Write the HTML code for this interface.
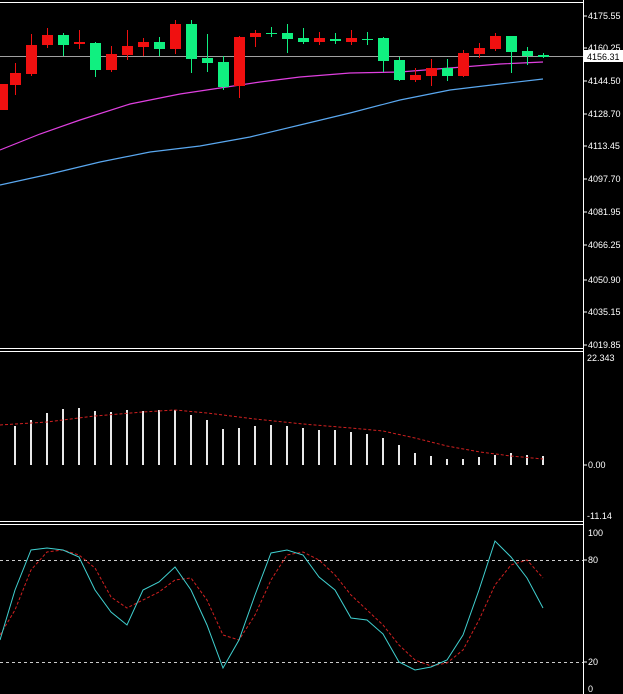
<!DOCTYPE html>
<html><head><meta charset="utf-8"><style>
html,body{margin:0;padding:0;background:#000;width:623px;height:694px;overflow:hidden}
svg{display:block}
text{font-family:"Liberation Sans",sans-serif;font-size:9px;fill:#fff}
</style></head><body>
<svg width="623" height="694" viewBox="0 0 623 694" xmlns="http://www.w3.org/2000/svg">
<rect width="623" height="694" fill="#000"/>
<line x1="0" y1="2.5" x2="583" y2="2.5" stroke="#fff"/>
<line x1="583.5" y1="0" x2="583.5" y2="694" stroke="#fff"/>
<line x1="0" y1="348.5" x2="583" y2="348.5" stroke="#fff"/>
<line x1="0" y1="351.5" x2="583" y2="351.5" stroke="#fff"/>
<line x1="0" y1="521.5" x2="583" y2="521.5" stroke="#fff"/>
<line x1="0" y1="524.5" x2="583" y2="524.5" stroke="#fff"/>
<line x1="0" y1="56.5" x2="583" y2="56.5" stroke="#a0a0a0"/>
<polyline fill="none" stroke="#e040e0" stroke-width="1.2" points="0,150 40,134 80,120 130,104 180,94 220,88 260,82 300,77 350,73 400,72 450,68 500,64 543,62"/>
<polyline fill="none" stroke="#5aa8f0" stroke-width="1.2" points="0,185 50,174 100,162 150,152 200,146 250,137 300,125 350,113 400,100 450,90 500,84 543,79"/>
<g id="c"></g>
<g>
<line x1="583" y1="16" x2="587" y2="16" stroke="#fff"/><text x="588" y="19">4175.55</text>
<line x1="583" y1="48" x2="587" y2="48" stroke="#fff"/><text x="588" y="51">4160.25</text>
<rect x="584" y="50" width="39" height="12" fill="#fff"/><text x="587" y="60" style="fill:#000">4156.31</text>
<line x1="583" y1="81" x2="587" y2="81" stroke="#fff"/><text x="588" y="84">4144.50</text>
<line x1="583" y1="114" x2="587" y2="114" stroke="#fff"/><text x="588" y="117">4128.70</text>
<line x1="583" y1="146" x2="587" y2="146" stroke="#fff"/><text x="588" y="149">4113.45</text>
<line x1="583" y1="179" x2="587" y2="179" stroke="#fff"/><text x="588" y="182">4097.70</text>
<line x1="583" y1="212" x2="587" y2="212" stroke="#fff"/><text x="588" y="215">4081.95</text>
<line x1="583" y1="245" x2="587" y2="245" stroke="#fff"/><text x="588" y="248">4066.25</text>
<line x1="583" y1="280" x2="587" y2="280" stroke="#fff"/><text x="588" y="283">4050.90</text>
<line x1="583" y1="312" x2="587" y2="312" stroke="#fff"/><text x="588" y="315">4035.15</text>
<line x1="583" y1="345" x2="587" y2="345" stroke="#fff"/><text x="588" y="348">4019.85</text>
<text x="587" y="361">22.343</text>
<line x1="583" y1="465" x2="587" y2="465" stroke="#fff"/><text x="588" y="468">0.00</text>
<text x="587" y="519">-11.14</text>
<text x="588" y="536">100</text>
<line x1="583" y1="560" x2="587" y2="560" stroke="#fff"/><text x="588" y="563">80</text>
<line x1="583" y1="662" x2="587" y2="662" stroke="#fff"/><text x="588" y="665">20</text>
<text x="588" y="692">0</text>
</g>
<line x1="0" y1="560.5" x2="583" y2="560.5" stroke="#ccc" stroke-dasharray="3,3"/>
<line x1="0" y1="662.5" x2="583" y2="662.5" stroke="#ccc" stroke-dasharray="3,3"/>
<polyline fill="none" stroke="#d02020" stroke-dasharray="3,2" points="0,635 15,610 31,570 47,552 63,550 79,555 95,568 111,597 127,608 143,600 159,592 175,580 191,578 207,600 223,635 239,640 255,615 271,580 287,555 303,552 319,560 335,575 351,595 367,610 383,625 399,645 415,660 431,666 447,663 463,650 479,620 495,585 511,565 527,560 543,578"/>
<polyline fill="none" stroke="#40d0d0" points="0,640 15,590 31,550 47,548 63,550 79,557 95,590 111,612 127,625 143,590 159,582 175,567 191,590 207,625 223,668 239,640 255,595 271,553 287,550 303,555 319,577 335,590 351,618 367,620 383,634 399,662 415,670 431,667 447,660 463,635 479,590 495,541 511,557 527,578 543,608"/>
<g id="m"></g>
<polyline fill="none" stroke="#d02020" stroke-dasharray="3,2" points="0,425 47,422 95,416 143,412 175,410 207,413 255,419 303,424 351,428 383,431 415,438 447,446 480,452 511,456 543,459"/>
</svg>
<script>
var C=[[2,84,110,84,110,1],[15,73,85,63,95,1],[31,45,74,34,76,1],[47,35,45,28,48,1],[63,35,45,33,56,0],[79,42,44,30,49,1],[95,43,70,42,77,0],[111,54,70,46,72,1],[127,46,55,30,60,1],[143,42,47,38,56,1],[159,42,49,37,56,0],[175,24,49,20,54,1],[191,24,59,20,73,0],[207,58,63,34,72,0],[223,62,87,56,90,0],[239,37,86,36,98,1],[255,33,37,30,47,1],[271,33,34,27,37,0],[287,33,39,24,53,0],[303,38,42,28,44,0],[319,38,42,32,45,1],[335,39,41,33,44,0],[351,38,42,30,45,1],[367,39,40,32,45,0],[383,38,61,37,72,0],[399,60,80,57,81,0],[415,75,80,68,82,1],[431,68,76,59,86,1],[447,68,76,59,81,0],[463,53,76,50,77,1],[479,48,54,43,58,1],[495,36,49,33,51,1],[511,36,52,36,73,0],[527,51,56,47,65,0],[543,55,57,53,58,0]];
var ns="http://www.w3.org/2000/svg",g=document.getElementById('c');
C.forEach(function(c){var col=c[5]?'#f01010':'#10f080';
var l=document.createElementNS(ns,'line');l.setAttribute('x1',c[0]+.5);l.setAttribute('x2',c[0]+.5);l.setAttribute('y1',c[3]);l.setAttribute('y2',c[4]);l.setAttribute('stroke',col);g.appendChild(l);
var r=document.createElementNS(ns,'rect');r.setAttribute('x',c[0]-5);r.setAttribute('y',c[1]);r.setAttribute('width',11);r.setAttribute('height',Math.max(1,c[2]-c[1]));r.setAttribute('fill',col);g.appendChild(r);});
var M=[[15,426],[31,420],[47,413],[63,409],[79,408],[95,411],[111,412],[127,410],[143,411],[159,410],[175,410],[191,415],[207,420],[223,429],[239,428],[255,426],[271,425],[287,426],[303,428],[319,430],[335,430],[351,432],[367,434],[383,438],[399,445],[415,453],[431,456],[447,459],[463,459],[479,457],[495,455],[511,453],[527,455],[543,456]];
var m=document.getElementById('m');
M.forEach(function(b){var r=document.createElementNS(ns,'rect');r.setAttribute('x',b[0]-1);r.setAttribute('y',b[1]);r.setAttribute('width',2);r.setAttribute('height',465-b[1]);r.setAttribute('fill','#e8e8e8');m.appendChild(r);});
</script>
</body></html>
